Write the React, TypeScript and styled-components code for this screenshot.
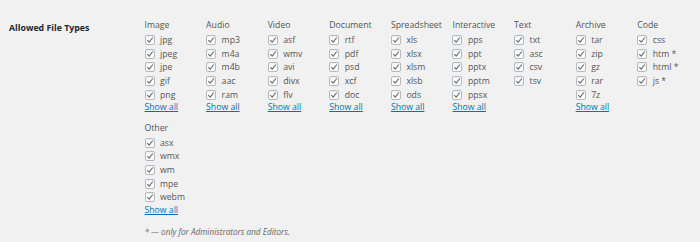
import React, { FC } from "react";
import styled, { createGlobalStyle } from "styled-components";

type Group = { title: string; items: string[] };

const groups: Group[] = [
  { title: "Image", items: ["jpg", "jpeg", "jpe", "gif", "png"] },
  { title: "Audio", items: ["mp3", "m4a", "m4b", "aac", "ram"] },
  { title: "Video", items: ["asf", "wmv", "avi", "divx", "flv"] },
  { title: "Document", items: ["rtf", "pdf", "psd", "xcf", "doc"] },
  { title: "Spreadsheet", items: ["xls", "xlsx", "xlsm", "xlsb", "ods"] },
  { title: "Interactive", items: ["pps", "ppt", "pptx", "pptm", "ppsx"] },
  { title: "Text", items: ["txt", "asc", "csv", "tsv"] },
  { title: "Archive", items: ["tar", "zip", "gz", "rar", "7z"] },
  { title: "Code", items: ["css", "htm *", "html *", "js *"] },
  { title: "Other", items: ["asx", "wmx", "wm", "mpe", "webm"] },
];

const GlobalStyle = createGlobalStyle`
  html, body {
    margin: 0;
    background: #f1f1f1;
  }
  body {
    font-family: "Open Sans", "Liberation Sans", sans-serif;
    color: #444;
  }
`;

const Check: FC = () => (
  <Box>
    <svg width="8" height="8" viewBox="0 0 10 10">
      <path d="M1.6 5.2 L4 7.7 L8.5 1.9" fill="none" stroke="#6a6a6a" strokeWidth="1.4" />
    </svg>
  </Box>
);

const App: FC = () => {
  return (
    <Page>
      <GlobalStyle />
      <Row>
        <Label>Allowed File Types</Label>
        <Field>
          <Columns>
            {groups.map((g) => (
              <Column key={g.title}>
                <ColTitle>{g.title}</ColTitle>
                {g.items.map((it) => (
                  <Item key={it}>
                    <Check />
                    <span>{it}</span>
                  </Item>
                ))}
                {g.items.length === 5 && <ShowAll href="#">Show all</ShowAll>}
              </Column>
            ))}
          </Columns>
          <Note>* — only for Administrators and Editors.</Note>
        </Field>
      </Row>
    </Page>
  );
};

const Page = styled.div`
  padding: 18px 0 0 9px;
  height: 242px;
  box-sizing: border-box;
  overflow: hidden;
`;

const Row = styled.div`
  display: flex;
`;

const Label = styled.div`
  width: 135.5px;
  flex-shrink: 0;
  font-size: 8.8px;
  font-weight: 700;
  color: #23282d;
  line-height: 13px;
  padding-top: 3.5px;
`;

const Field = styled.div`
  flex: 1;
`;

const Columns = styled.div`
  display: flex;
  flex-wrap: wrap;
  width: 556px;
  row-gap: 6px;
`;

const Column = styled.div`
  width: 61.6px;
  font-size: 8.7px;
`;

const ColTitle = styled.div`
  line-height: 14px;
  margin-bottom: 1px;
  color: #555;
`;

const Item = styled.label`
  display: flex;
  align-items: center;
  gap: 5.5px;
  height: 13.7px;
  color: #555;
`;

const Box = styled.span`
  box-sizing: border-box;
  width: 10px;
  height: 10px;
  border: 1px solid #b4b9be;
  border-radius: 2px;
  background: #fff;
  display: inline-flex;
  align-items: center;
  justify-content: center;
  box-shadow: inset 0 1px 2px rgba(0, 0, 0, 0.07);
`;

const ShowAll = styled.a`
  display: block;
  line-height: 13.3px;
  color: #0073aa;
  text-decoration: underline;
`;

const Note = styled.p`
  margin: 9px 0 0;
  font-size: 8.2px;
  font-style: italic;
  color: #666;
`;

export default App;
